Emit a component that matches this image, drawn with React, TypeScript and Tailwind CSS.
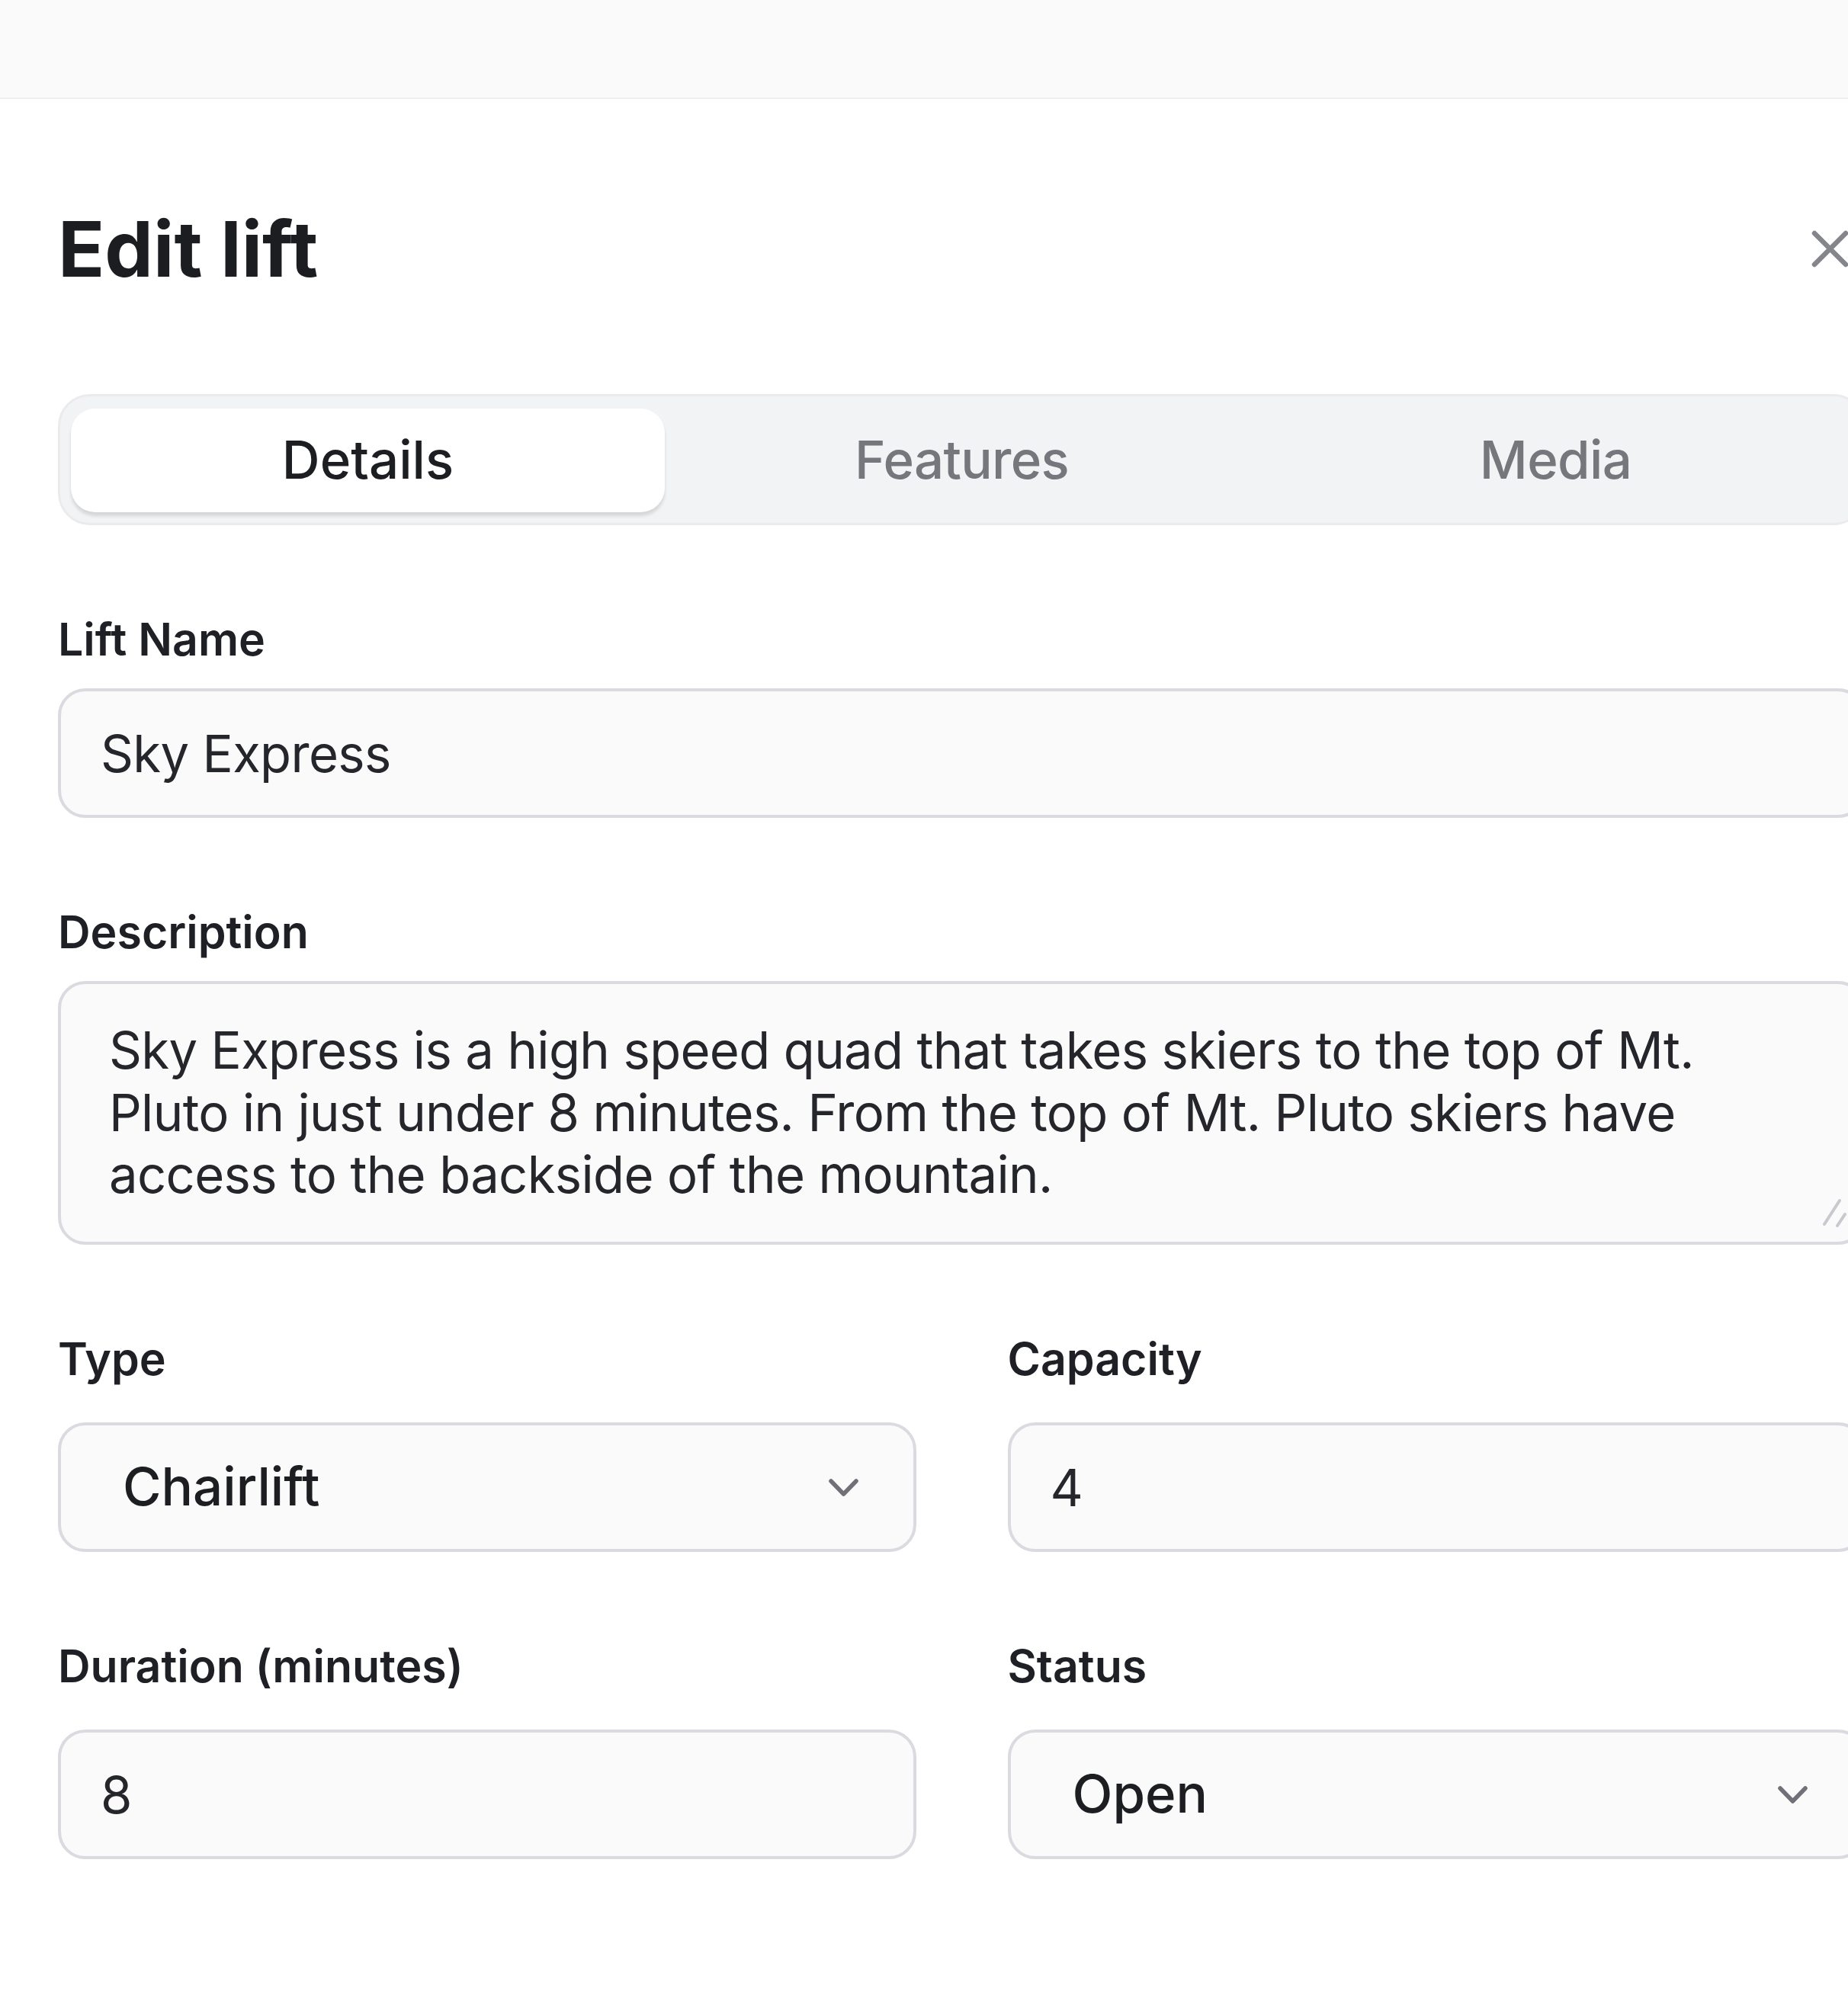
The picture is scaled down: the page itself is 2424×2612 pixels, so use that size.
export default function App() {
  return (
    <div className="relative h-[2612px] w-[2424px] overflow-hidden bg-white font-['Inter',sans-serif] text-[#1d1e22]">
      <div className="h-[130px] border-b-2 border-[#efeff1] bg-[#fafafa]" />
      <EditLiftDialog />
    </div>
  );
}

function CloseIcon() {
  return (
    <svg width="49" height="49" viewBox="0 0 49 49" fill="none" stroke="#85868c" strokeWidth="6.5" strokeLinecap="round">
      <path d="M4 4 L45 45" />
      <path d="M45 4 L4 45" />
    </svg>
  );
}

function Chevron() {
  return (
    <svg width="39" height="23" viewBox="0 0 39 23" fill="none" stroke="#707177" strokeWidth="5.5" strokeLinecap="round" strokeLinejoin="round">
      <path d="M3 3 L19.5 20 L36 3" />
    </svg>
  );
}

function Label({ children }: { children: React.ReactNode }) {
  return <label className="block text-[59px] font-semibold leading-none text-[#1f2025]">{children}</label>;
}

const fieldBox =
  "h-[170px] w-full rounded-[36px] border-4 border-[#dadae0] bg-[#fafafa] text-[67px] text-[#25262b] outline-none";

function TextInput({ value }: { value: string }) {
  return <input readOnly defaultValue={value} className={`${fieldBox} pl-[52px] tracking-[-0.01em]`} />;
}

function SelectBox({ value }: { value: string }) {
  return (
    <div className={`${fieldBox} flex items-center justify-between pl-[81px] pr-[72px]`}>
      <span className="text-[69px] font-medium text-[#1d1e22]">{value}</span>
      <Chevron />
    </div>
  );
}

function EditLiftDialog() {
  const tabs = ["Details", "Features", "Media"];
  return (
    <div className="w-[2523px] px-[76px]">
      <div className="flex items-center justify-between pt-[146px]">
        <h2 className="text-[101px] font-bold leading-none text-[#1c1d21]">Edit lift</h2>
        <button className="mr-[22px]">
          <CloseIcon />
        </button>
      </div>

      <div className="mt-[140px] grid grid-cols-3 rounded-[42px] border-[3px] border-[#ebebee] bg-[#f2f3f5] px-[14px] pb-[14px] pt-[16px]">
        {tabs.map((t, i) => (
          <div
            key={t}
            className={
              i === 0
                ? "flex h-[136px] items-center justify-center rounded-[32px] bg-white text-[69px] font-medium text-[#1d1e22] shadow-[0_5px_4px_rgba(0,0,0,0.12)]"
                : "flex h-[136px] items-center justify-center text-[69px] font-medium tracking-[-0.01em] text-[#75777d]"
            }
          >
            {t}
          </div>
        ))}
      </div>

      <div className="mt-[120px]">
        <Label>Lift Name</Label>
        <div className="mt-[35px]">
          <TextInput value="Sky Express" />
        </div>
      </div>

      <div className="mt-[120px]">
        <Label>Description</Label>
        <div className="relative mt-[35px]">
          <textarea
            readOnly
            defaultValue="Sky Express is a high speed quad that takes skiers to the top of Mt. Pluto in just under 8 minutes. From the top of Mt. Pluto skiers have access to the backside of the mountain."
            className="block h-[346px] w-full resize-none overflow-hidden rounded-[36px] border-4 border-[#dadae0] bg-[#fafafa] pl-[63px] pr-[90px] pt-[46px] text-[67px] leading-[81.5px] tracking-[-0.01em] text-[#25262b] outline-none"
          />
          <svg className="absolute left-[2304px] top-[281px]" width="60" height="50" viewBox="0 0 60 50" fill="none" stroke="#c8c8ce" strokeWidth="4" strokeLinecap="round">
            <path d="M13 38 L33 7" />
            <path d="M30 40 L40 25" />
          </svg>
        </div>
      </div>

      <div className="mt-[120px] grid grid-cols-2 gap-x-[120px] gap-y-[120px]">
        <div>
          <Label>Type</Label>
          <div className="mt-[54px]">
            <SelectBox value="Chairlift" />
          </div>
        </div>
        <div>
          <Label>Capacity</Label>
          <div className="mt-[54px]">
            <TextInput value="4" />
          </div>
        </div>
        <div>
          <Label>Duration (minutes)</Label>
          <div className="mt-[54px]">
            <TextInput value="8" />
          </div>
        </div>
        <div>
          <Label>Status</Label>
          <div className="mt-[54px]">
            <SelectBox value="Open" />
          </div>
        </div>
      </div>
    </div>
  );
}
